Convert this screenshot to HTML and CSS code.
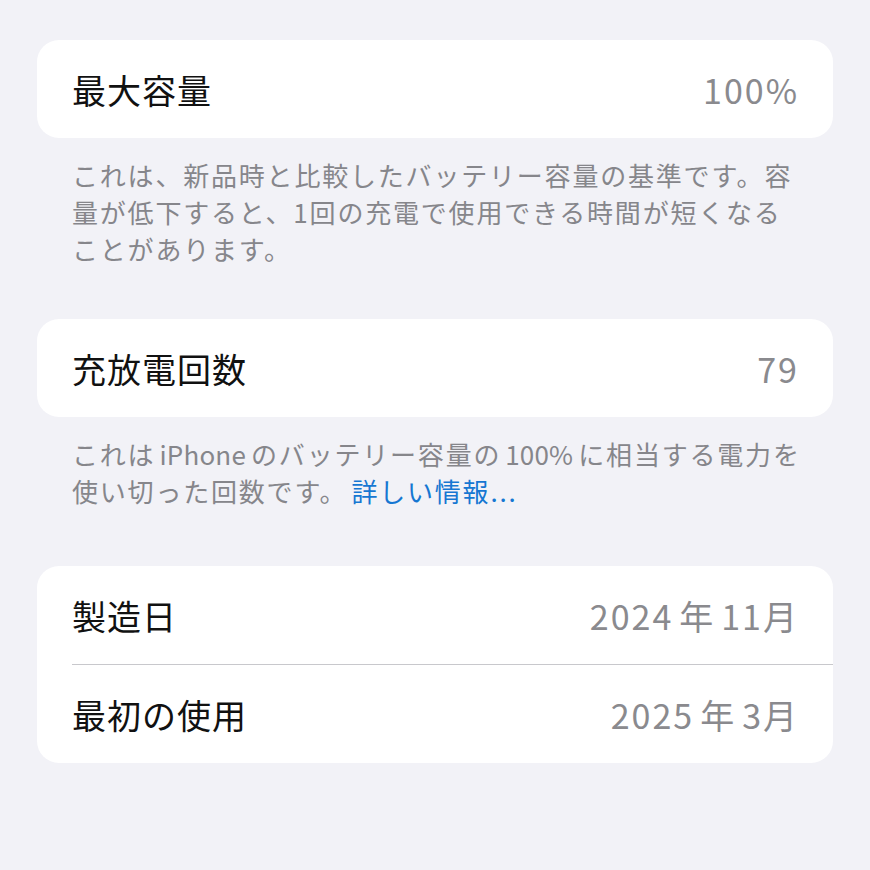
FILE: index.html
```html
<!DOCTYPE html>
<html lang="ja">
	<head>
		<meta charset="UTF-8">
		<meta name="viewport" content="width=device-width, initial-scale=1.0">
		<title>バッテリーの状態</title>
		<link rel="stylesheet" href="styles.css">
	</head>
	<body>
		<!-- 最大容量 -->
		<div class="group">
			<div class="row">
				<span class="label">最大容量</span>
				<span class="value">100%</span>
			</div>
		</div>
		<p class="note note-first">これは、新品時と比較したバッテリー容量の基準です。容<br>量が低下すると、1回の充電で使用できる時間が短くなる<br>ことがあります。</p>

		<!-- 充放電回数 -->
		<div class="group">
			<div class="row">
				<span class="label">充放電回数</span>
				<span class="value">79</span>
			</div>
		</div>
		<p class="note note-second">これは<span class="latin">iPhone</span>のバッテリー容量の<span class="latin">100%</span>に相当する電力を<br>使い切った回数です。<a href="#" class="more">詳しい情報...</a></p>

		<!-- 日付 -->
		<div class="group group-list">
			<div class="row">
				<span class="label">製造日</span>
				<span class="value">2024<span class="gap">年</span>11月</span>
			</div>
			<div class="row">
				<span class="label">最初の使用</span>
				<span class="value">2025<span class="gap">年</span>3月</span>
			</div>
		</div>
	</body>
</html>
```

FILE: styles.css
```css
/* ページ全体 */
body,
html {
	margin: 0;
	background: #f2f2f7;
	font-family: "Noto Sans CJK JP", "Noto Sans", sans-serif;
}

body {
	padding: 40px 37px;
}

/* 白いカード */
.group {
	background: #fff;
	border-radius: 22px;
	padding-left: 35px;
}

/* 一行 */
.row {
	display: flex;
	justify-content: space-between;
	align-items: center;
	height: 98px;
	padding-right: 34px;
}

/* 行の区切り線（左は余白から、右は端まで） */
.group-list .row + .row {
	border-top: 1px solid #c8c8cc;
}

.label {
	font-size: 34px;
	letter-spacing: 1px;
	color: #111;
}

.value {
	font-size: 34px;
	letter-spacing: 2px;
	color: #8a8a8e;
}

/* 数字と漢字のあいだの小さな隙間 */
.gap {
	margin: 0 6px;
}

/* カード下の説明文 */
.note {
	margin: 0;
	padding: 18px 0 0 35px;
	font-size: 26px;
	line-height: 37px;
	letter-spacing: 1.8px;
	white-space: nowrap;
	color: #86868b;
}

.note .latin {
	letter-spacing: 0.2px;
	margin: 0 5px 0 4px;
}

.note-first {
	margin-bottom: 52px;
}

.note-second {
	margin-bottom: 57px;
}

/* 詳しい情報リンク */
.more {
	color: #1677d2;
	text-decoration: none;
	margin-left: 4px;
}
```
